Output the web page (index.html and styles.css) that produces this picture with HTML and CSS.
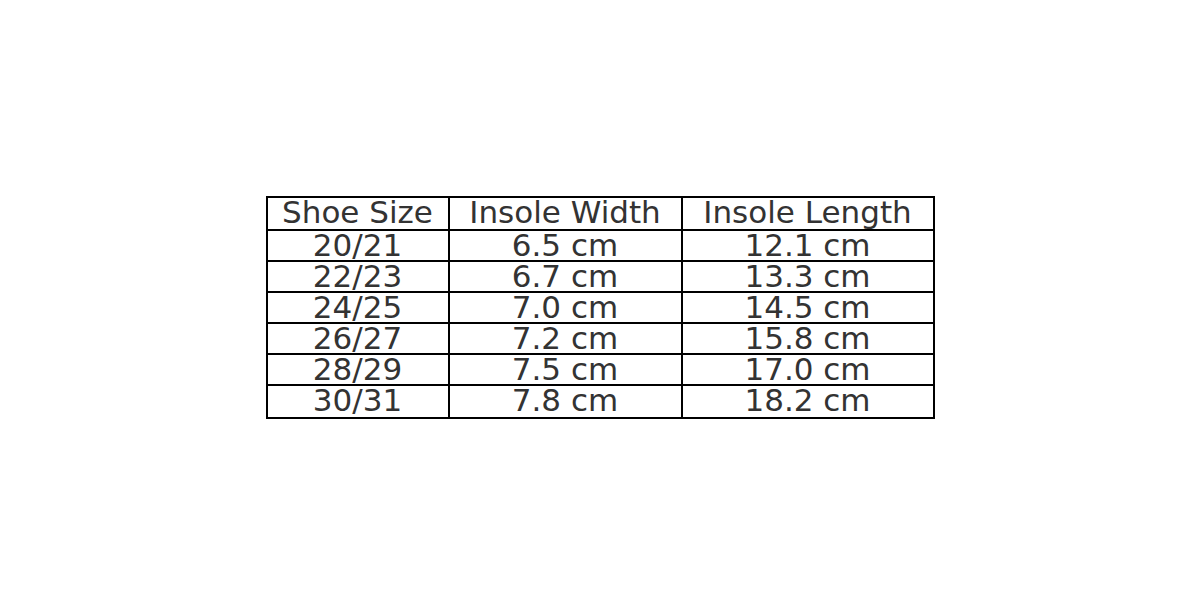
FILE: index.html
```html
<!DOCTYPE html>
<html>
<head>
<meta charset="utf-8">
<link rel="stylesheet" href="styles.css">
</head>
<body>
<main class="page">
  <table class="sizes">
    <thead>
      <tr><th class="c1">Shoe Size</th><th class="c2">Insole Width</th><th class="c3">Insole Length</th></tr>
    </thead>
    <tbody>
      <tr><td>20/21</td><td>6.5 cm</td><td>12.1 cm</td></tr>
      <tr><td>22/23</td><td>6.7 cm</td><td>13.3 cm</td></tr>
      <tr><td>24/25</td><td>7.0 cm</td><td>14.5 cm</td></tr>
      <tr><td>26/27</td><td>7.2 cm</td><td>15.8 cm</td></tr>
      <tr><td>28/29</td><td>7.5 cm</td><td>17.0 cm</td></tr>
      <tr class="last"><td>30/31</td><td>7.8 cm</td><td>18.2 cm</td></tr>
    </tbody>
  </table>
</main>
</body>
</html>
```
FILE: styles.css
```css
html, body {
  margin: 0;
  padding: 0;
  background: #fff;
}
.page {
  width: 1200px;
  height: 615px;
  display: flex;
  align-items: center;
  justify-content: center;
}
.sizes {
  border-collapse: collapse;
  border: 2px solid #000;
  font-family: "DejaVu Sans", sans-serif;
  font-size: 31px;
  color: #333;
}
.sizes th, .sizes td {
  border: 2px solid #000;
  padding: 0;
  height: 29px;
  line-height: 28px;
  text-align: center;
  vertical-align: top;
  font-weight: normal;
  white-space: nowrap;
}
.sizes th {
  height: 31px;
}
.sizes .last td {
  height: 31px;
}
.c1 { width: 180px; }
.c2 { width: 231px; }
.c3 { width: 250px; }
```
